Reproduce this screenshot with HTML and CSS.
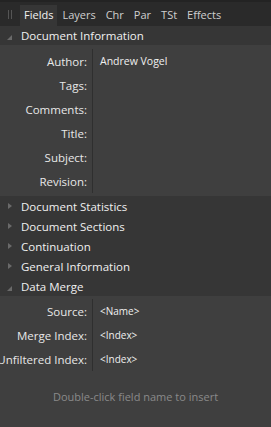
FILE: index.html
```html
<!DOCTYPE html>
<html lang="en">
<head>
  <meta charset="UTF-8">
  <title>Fields</title>
  <link rel="stylesheet" href="styles.css">
</head>
<body>
  <div class="panel">
    <div class="tabs">
      <span class="grip"></span>
      <span class="tab active">Fields</span>
      <span class="tab">Layers</span>
      <span class="tab">Chr</span>
      <span class="tab">Par</span>
      <span class="tab">TSt</span>
      <span class="tab">Effects</span>
    </div>

    <div class="section-head open first"><span class="arrow"></span>Document Information</div>
    <div class="fields">
      <div class="row"><div class="label">Author:</div><div class="value">Andrew Vogel</div></div>
      <div class="row"><div class="label">Tags:</div><div class="value"></div></div>
      <div class="row"><div class="label">Comments:</div><div class="value"></div></div>
      <div class="row"><div class="label">Title:</div><div class="value"></div></div>
      <div class="row"><div class="label">Subject:</div><div class="value"></div></div>
      <div class="row"><div class="label">Revision:</div><div class="value"></div></div>
    </div>

    <div class="section-head"><span class="arrow"></span>Document Statistics</div>
    <div class="section-head"><span class="arrow"></span>Document Sections</div>
    <div class="section-head"><span class="arrow"></span>Continuation</div>
    <div class="section-head"><span class="arrow"></span>General Information</div>
    <div class="section-head open"><span class="arrow"></span>Data Merge</div>
    <div class="fields merge">
      <div class="row"><div class="label">Source:</div><div class="value small">&lt;Name&gt;</div></div>
      <div class="row"><div class="label">Merge Index:</div><div class="value small">&lt;Index&gt;</div></div>
      <div class="row"><div class="label">Unfiltered Index:</div><div class="value small">&lt;Index&gt;</div></div>
    </div>

    <div class="hint">Double-click field name to insert</div>
  </div>
</body>
</html>
```

FILE: styles.css
```css
body {
  margin: 0;
  padding: 0;
  background-color: #3f3f3f;
  font-family: "Open Sans", "Noto Sans", sans-serif;
  font-size: 11px;
  color: #e6e6e6;
}
.panel {
  width: 271px;
  height: 427px;
  overflow: hidden;
  background-color: #3f3f3f;
}
.tabs {
  display: flex;
  align-items: flex-end;
  height: 26px;
  background-color: #2a2a2a;
  border-top: 2px solid #232323;
  box-sizing: border-box;
}
.grip {
  width: 4px;
  height: 9px;
  margin: 0 8px 7px 8px;
  border-left: 1px solid #555;
  border-right: 1px solid #555;
  box-sizing: border-box;
}
.tab {
  padding: 0 5px;
  height: 21px;
  line-height: 20px;
  color: #cfcfcf;
}
.tab.active {
  padding: 0 4px;
  background-color: #363636;
  color: #f2f2f2;
}
.section-head {
  display: flex;
  align-items: center;
  height: 20px;
  background-color: #363636;
  color: #f0f0f0;
  font-size: 11.5px;
}
.section-head.first {
  height: 19px;
}
.arrow {
  width: 0;
  height: 0;
  margin: 0 9px 0 8px;
  border-top: 3px solid transparent;
  border-bottom: 3px solid transparent;
  border-left: 4px solid #6a6a6a;
}
.section-head.open .arrow {
  margin: 4px 9px 0 7px;
  border-top: 5px solid transparent;
  border-bottom: 0;
  border-left: 0;
  border-right: 5px solid #6a6a6a;
}
.fields {
  padding: 4px 0 3px 0;
  background-color: #3f3f3f;
}
.fields.merge {
  padding: 3px 0 1px 0;
}
.row {
  display: flex;
  height: 24px;
  align-items: center;
}
.label {
  width: 87px;
  flex: none;
  display: flex;
  justify-content: flex-end;
  white-space: nowrap;
  font-size: 11.5px;
  color: #e8e8e8;
}
.value {
  flex: 1;
  height: 24px;
  line-height: 24px;
  margin-left: 5px;
  padding-left: 7px;
  border-left: 1px solid #2f2f2f;
  font-size: 10.5px;
  color: #f0f0f0;
}
.value.small {
  font-size: 10px;
}
.hint {
  text-align: center;
  margin-top: 17px;
  color: #8a8a8a;
  font-size: 11px;
}
```
